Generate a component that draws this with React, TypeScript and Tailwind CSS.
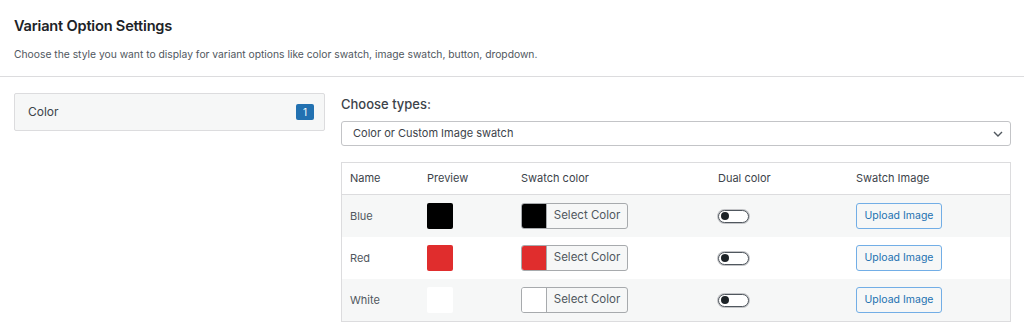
import React from "react";

const rows = [
  { name: "Blue", color: "#000000", gray: true },
  { name: "Red", color: "#e02d2d", gray: false },
  { name: "White", color: "#ffffff", gray: true },
];

function Toggle() {
  return (
    <div className="w-[31px] h-[13px] rounded-full border-[1.5px] border-[#50575e] bg-white flex items-center pl-[2px] shadow-[0_0_0_1px_#c3c4c7]">
      <div className="w-[8px] h-[8px] rounded-full bg-[#1d2327]" />
    </div>
  );
}

export default function App() {
  return (
    <div className="w-[1024px] h-[336px] bg-white text-[#50575e] overflow-hidden" style={{ fontFamily: "Inter, 'Noto Sans', sans-serif" }}>
      <div className="px-[14px] pt-[16px] pb-[15px]">
        <h1 className="text-[14.6px] leading-[20px] font-semibold text-[#1d2327] tracking-[-0.2px]">Variant Option Settings</h1>
        <p className="mt-[11px] text-[10.3px] leading-[14px] text-[#50575e]">
          Choose the style you want to display for variant options like color swatch, image swatch, button, dropdown.
        </p>
      </div>
      <div className="h-px bg-[#dcdcde]" />
      <div className="flex pt-[16px] pl-[14px] pr-[13px] gap-[16px]">
        <div className="w-[311px] shrink-0">
          <div className="h-[38px] border border-[#dcdcde] rounded-[2px] bg-[#f6f7f7] flex items-center justify-between pl-[13px] pr-[10px]">
            <span className="text-[12px] text-[#3c434a]">Color</span>
            <span className="w-[18px] h-[16px] rounded-[2px] bg-[#2271b1] text-white text-[10px] flex items-center justify-center">1</span>
          </div>
        </div>
        <div className="flex-1">
          <div className="pt-[3px] text-[13px] leading-[16px] font-medium text-[#3c434a]">Choose types:</div>
          <div className="mt-[9px] h-[25px] border border-[#c3c4c7] rounded-[3px] bg-white flex items-center justify-between pl-[11px] pr-[7px]">
            <span className="text-[11px] text-[#3c434a]">Color or Custom Image swatch</span>
            <svg width="10" height="6" viewBox="0 0 10 6" fill="none">
              <path d="M1 1l4 4 4-4" stroke="#50575e" strokeWidth="1.4" />
            </svg>
          </div>
          <div className="mt-[16px] border border-[#dcdcde]">
            <div className="h-[32px] flex items-center text-[11px] text-[#3c434a] border-b border-[#dcdcde]">
              <div className="w-[85px] pl-[8px]">Name</div>
              <div className="w-[94px]">Preview</div>
              <div className="w-[197px]">Swatch color</div>
              <div className="w-[138px]">Dual color</div>
              <div>Swatch Image</div>
            </div>
            {rows.map((r) => (
              <div key={r.name} className={`h-[42px] flex items-center text-[11px] ${r.gray ? "bg-[#f6f7f7]" : "bg-white"}`}>
                <div className="w-[85px] pl-[8px]">{r.name}</div>
                <div className="w-[94px]">
                  <div className="w-[26px] h-[26px] rounded-[2px]" style={{ backgroundColor: r.color }} />
                </div>
                <div className="w-[197px]">
                  <div className="w-[107px] h-[26px] flex border border-[#a7aaad] rounded-[3px] overflow-hidden bg-[#f6f7f7]">
                    <div className="w-[25px] h-full border-r border-[#a7aaad]" style={{ backgroundColor: r.color }} />
                    <div className="flex-1 flex items-center justify-center text-[11.5px] text-[#50575e]">Select Color</div>
                  </div>
                </div>
                <div className="w-[138px]">
                  <Toggle />
                </div>
                <div>
                  <div className="w-[86px] h-[26px] border border-[#72aee6] rounded-[3px] bg-[#f6f7f7] flex items-center justify-center text-[10.5px] text-[#2271b1]">
                    Upload Image
                  </div>
                </div>
              </div>
            ))}
          </div>
        </div>
      </div>
    </div>
  );
}
